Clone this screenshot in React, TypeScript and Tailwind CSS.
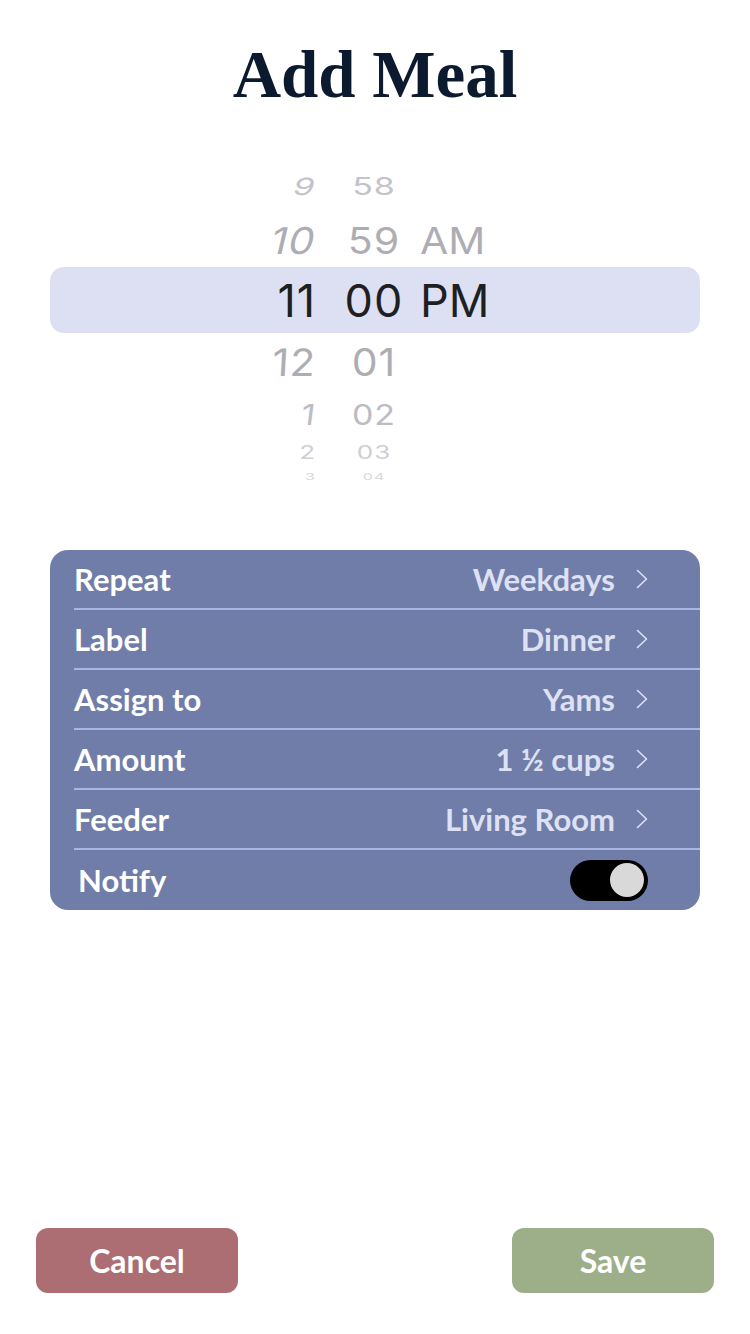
import React from 'react';

type WheelRow = {
    h: string;
    m: string;
    ap?: string;
    height: string;
    size: string;
    color: string;
    squash: string;
    skew?: string;
};

const rows: WheelRow[] = [
    { h: '9', m: '58', height: 'h-[52px]', size: 'text-[34px]', color: 'text-[#c4c3c9]', squash: 'scale-y-[0.7]', skew: '-skew-x-12' },
    { h: '10', m: '59', ap: 'AM', height: 'h-[54px]', size: 'text-[41px]', color: 'text-[#aeadb4]', squash: 'scale-y-[0.9]', skew: '-skew-x-12' },
    { h: '11', m: '00', ap: 'PM', height: 'h-[66px]', size: 'text-[45px]', color: 'text-[#1f1f22]', squash: 'scale-y-100' },
    { h: '12', m: '01', height: 'h-[58px]', size: 'text-[41px]', color: 'text-[#aeadb4]', squash: 'scale-y-[0.92]', skew: '-skew-x-3' },
    { h: '1', m: '02', height: 'h-[48px]', size: 'text-[34px]', color: 'text-[#bdbcc2]', squash: 'scale-y-[0.85]', skew: '-skew-x-6' },
    { h: '2', m: '03', height: 'h-[28px]', size: 'text-[26px]', color: 'text-[#cfced3]', squash: 'scale-y-[0.72]' },
    { h: '3', m: '04', height: 'h-[20px]', size: 'text-[16px]', color: 'text-[#d9d8dc]', squash: 'scale-y-[0.55]' },
];

const Chevron = () => (
    <svg width="12" height="20" viewBox="0 0 12 20" className="ml-[21px] shrink-0">
        <path d="M1.5 1.5 L10.5 10 L1.5 18.5" fill="none" stroke="#dde1f3" strokeWidth="1.6" strokeLinecap="round" strokeLinejoin="round" />
    </svg>
);

const settings = [
    { label: 'Repeat', value: 'Weekdays' },
    { label: 'Label', value: 'Dinner' },
    { label: 'Assign to', value: 'Yams' },
    { label: 'Amount', value: '1 ½ cups' },
    { label: 'Feeder', value: 'Living Room' },
];

export default function App() {
    return (
        <div className="w-[750px] h-[1334px] bg-white flex flex-col" style={{ fontFamily: 'Lato, "Open Sans", sans-serif' }}>
            {/* Title */}
            <h1
                className="pt-[34px] h-[120px] text-center text-[67px] leading-[80px] font-bold text-[#0b1a2e]"
                style={{ fontFamily: '"Liberation Serif", "DejaVu Serif", serif' }}
            >
                Add Meal
            </h1>

            {/* Time wheel */}
            <div className="relative mt-[41px] mx-[50px]">
                <div className="absolute left-0 right-0 top-[106px] h-[66px] rounded-[14px] bg-[#dce0f2]" />
                <div className="relative flex flex-col" style={{ fontFamily: 'Inter, "Liberation Sans", sans-serif' }}>
                    {rows.map((r, i) => (
                        <div key={i} className={`flex items-center ${r.height} ${r.size} ${r.color}`}>
                            <div className={`w-[266px] text-right leading-none tracking-[1px] ${r.squash} ${r.skew ?? ''}`}>{r.h}</div>
                            <div className={`w-[116px] text-center leading-none tracking-[1px] ${r.squash}`}>{r.m}</div>
                            <div className={`-ml-[12px] leading-none ${r.squash}`}>{r.ap ?? ''}</div>
                        </div>
                    ))}
                </div>
            </div>

            {/* Settings card */}
            <div className="mt-[63px] mx-[50px] rounded-[18px] bg-[#707da8] overflow-hidden">
                {settings.map((s) => (
                    <div key={s.label} className="ml-[24px] h-[60px] flex items-center border-b-2 border-[#a9b5e3] pr-[52px]">
                        <span className="flex-1 text-[31px] font-bold text-white leading-none">{s.label}</span>
                        <span className="text-[31px] font-bold text-[#dde1f3] leading-none">{s.value}</span>
                        <Chevron />
                    </div>
                ))}
                <div className="ml-[28px] h-[60px] flex items-center pr-[52px]">
                    <span className="flex-1 text-[31px] font-bold text-white leading-none">Notify</span>
                    <div className="w-[78px] h-[41px] rounded-full bg-black flex items-center justify-end pr-[4px]">
                        <div className="w-[34px] h-[34px] rounded-full bg-[#d9d9d9]" />
                    </div>
                </div>
            </div>

            {/* Buttons */}
            <div className="mt-auto mb-[41px] flex justify-between px-[36px]">
                <button className="w-[202px] h-[65px] rounded-[12px] bg-[#ad6e73] text-white text-[32px] font-bold">Cancel</button>
                <button className="w-[202px] h-[65px] rounded-[12px] bg-[#9daf88] text-white text-[32px] font-bold">Save</button>
            </div>
        </div>
    );
}
